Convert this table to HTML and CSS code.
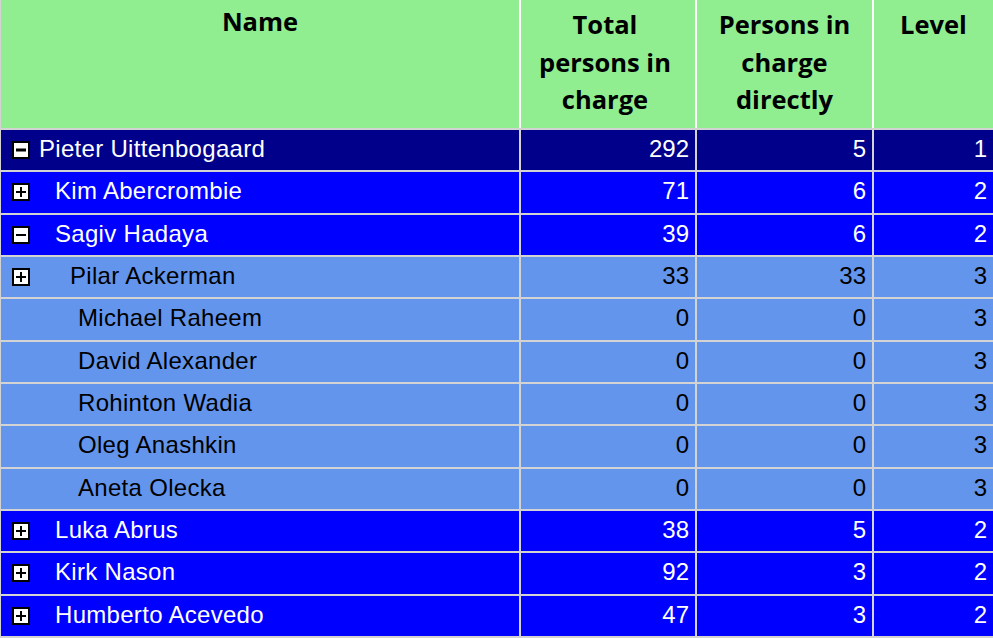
FILE: index.html
```html
<!DOCTYPE html>
<html>
<head>
<meta charset="utf-8">
<link rel="stylesheet" href="styles.css">
</head>
<body>
<div class="table">
  <div class="row head">
    <div class="cell hname">Name</div>
    <div class="cell htotal">Total<br>persons in<br>charge</div>
    <div class="cell">Persons in<br>charge<br>directly</div>
    <div class="cell">Level</div>
  </div>

  <div class="row navy">
    <div class="cell name"><svg class="tog" viewBox="0 0 18 18"><rect x="1" y="1" width="16" height="16" fill="#fff" stroke="#000" stroke-width="2"/><rect x="4" y="7.5" width="10" height="3"/></svg><span class="l1">Pieter Uittenbogaard</span></div>
    <div class="cell num">292</div><div class="cell num">5</div><div class="cell num">1</div>
  </div>
  <div class="row blue">
    <div class="cell name"><svg class="tog" viewBox="0 0 18 18"><rect x="1" y="1" width="16" height="16" fill="#fff" stroke="#000" stroke-width="2"/><rect x="4" y="8" width="10" height="2"/><rect x="8" y="4" width="2" height="10"/></svg><span class="l2">Kim Abercrombie</span></div>
    <div class="cell num">71</div><div class="cell num">6</div><div class="cell num">2</div>
  </div>
  <div class="row blue">
    <div class="cell name"><svg class="tog" viewBox="0 0 18 18"><rect x="1" y="1" width="16" height="16" fill="#fff" stroke="#000" stroke-width="2"/><rect x="4" y="8" width="10" height="2"/></svg><span class="l2">Sagiv Hadaya</span></div>
    <div class="cell num">39</div><div class="cell num">6</div><div class="cell num">2</div>
  </div>
  <div class="row light">
    <div class="cell name"><svg class="tog" viewBox="0 0 18 18"><rect x="1" y="1" width="16" height="16" fill="#fff" stroke="#000" stroke-width="2"/><rect x="4" y="8" width="10" height="2"/><rect x="8" y="4" width="2" height="10"/></svg><span class="l3">Pilar Ackerman</span></div>
    <div class="cell num">33</div><div class="cell num">33</div><div class="cell num">3</div>
  </div>
  <div class="row light">
    <div class="cell name leaf"><span>Michael Raheem</span></div>
    <div class="cell num">0</div><div class="cell num">0</div><div class="cell num">3</div>
  </div>
  <div class="row light">
    <div class="cell name leaf"><span>David Alexander</span></div>
    <div class="cell num">0</div><div class="cell num">0</div><div class="cell num">3</div>
  </div>
  <div class="row light">
    <div class="cell name leaf"><span>Rohinton Wadia</span></div>
    <div class="cell num">0</div><div class="cell num">0</div><div class="cell num">3</div>
  </div>
  <div class="row light">
    <div class="cell name leaf"><span>Oleg Anashkin</span></div>
    <div class="cell num">0</div><div class="cell num">0</div><div class="cell num">3</div>
  </div>
  <div class="row light">
    <div class="cell name leaf"><span>Aneta Olecka</span></div>
    <div class="cell num">0</div><div class="cell num">0</div><div class="cell num">3</div>
  </div>
  <div class="row blue">
    <div class="cell name"><svg class="tog" viewBox="0 0 18 18"><rect x="1" y="1" width="16" height="16" fill="#fff" stroke="#000" stroke-width="2"/><rect x="4" y="8" width="10" height="2"/><rect x="8" y="4" width="2" height="10"/></svg><span class="l2">Luka Abrus</span></div>
    <div class="cell num">38</div><div class="cell num">5</div><div class="cell num">2</div>
  </div>
  <div class="row blue">
    <div class="cell name"><svg class="tog" viewBox="0 0 18 18"><rect x="1" y="1" width="16" height="16" fill="#fff" stroke="#000" stroke-width="2"/><rect x="4" y="8" width="10" height="2"/><rect x="8" y="4" width="2" height="10"/></svg><span class="l2">Kirk Nason</span></div>
    <div class="cell num">92</div><div class="cell num">3</div><div class="cell num">2</div>
  </div>
  <div class="row blue">
    <div class="cell name"><svg class="tog" viewBox="0 0 18 18"><rect x="1" y="1" width="16" height="16" fill="#fff" stroke="#000" stroke-width="2"/><rect x="4" y="8" width="10" height="2"/><rect x="8" y="4" width="2" height="10"/></svg><span class="l2">Humberto Acevedo</span></div>
    <div class="cell num">47</div><div class="cell num">3</div><div class="cell num">2</div>
  </div>
</div>
</body>
</html>
```

FILE: styles.css
```css
html, body {
  margin: 0;
  padding: 0;
  background: #ffffff;
  overflow: hidden;
}

.table {
  width: 992px;
  border-left: 1px solid #d3d3d3;
  font-family: "Liberation Sans", Arial, sans-serif;
  font-size: 24px;
}

.row {
  display: grid;
  grid-template-columns: 520px 176px 177px 119px;
  height: 42.33px;
  box-sizing: border-box;
  border-bottom: 2px solid #d3d3d3;
}

.cell {
  box-sizing: border-box;
  border-right: 2px solid #d3d3d3;
  line-height: 38px;
  white-space: nowrap;
  overflow: hidden;
}

.cell:last-child {
  border-right: none;
}

.head {
  height: 130px;
  background: #90ee90;
  color: #000;
}

.head .cell {
  border-right-color: #ffffff;
  font-family: "Open Sans", "DejaVu Sans", sans-serif;
  font-weight: 700;
  font-size: 25.5px;
  line-height: 37.5px;
  text-align: center;
  padding-top: 6px;
}

.head .hname {
  padding-top: 3px;
}

.head .htotal {
  padding-right: 6px;
}

.navy { background: #00008b; color: #ffffff; }
.blue { background: #0000ff; color: #ffffff; }
.light { background: #6495ed; color: #000000; }

.name {
  display: flex;
  align-items: flex-start;
  padding-left: 11px;
  letter-spacing: 0.3px;
}

.name.leaf {
  padding-left: 77px;
}

.tog {
  width: 18px;
  height: 18px;
  flex: none;
  align-self: center;
}

.l1 { margin-left: 9px; }
.l2 { margin-left: 25px; }
.l3 { margin-left: 40px; }

.num {
  text-align: right;
  padding-right: 6px;
}
```
